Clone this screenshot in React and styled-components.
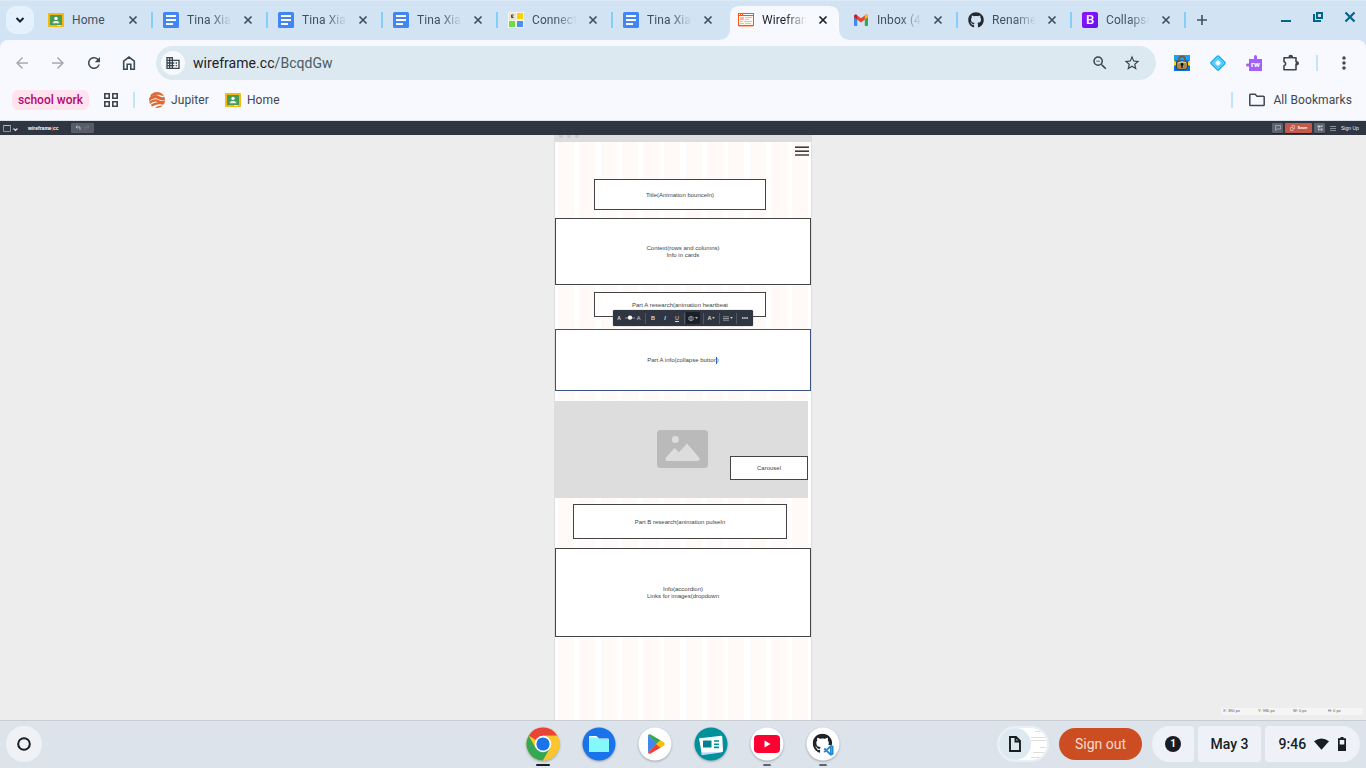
import React from 'react';
import styled, { createGlobalStyle, css } from 'styled-components';
import { FaGithub } from 'react-icons/fa';
import { MdDomain, MdZoomOut, MdStarOutline, MdMoreVert, MdArrowBack, MdArrowForward, MdRefresh } from 'react-icons/md';

const Global = createGlobalStyle`
  * { box-sizing: border-box; }
  html, body { margin: 0; padding: 0; }
  body { width: 1366px; height: 768px; overflow: hidden; font-family: Roboto, "Liberation Sans", sans-serif; }
  svg { display: block; flex: none; }
`;

const Desktop = styled.div`
  width: 1366px; height: 768px; display: flex; flex-direction: column; overflow: hidden;
  background: #d2e4f3;
`;

/* ---------- tab strip ---------- */
const TabStrip = styled.div`
  height: 40px; flex: none; display: flex; align-items: stretch; padding-left: 6px;
  border-top: 1px solid #dbeaf6;
`;
const TabSearch = styled.div`
  width: 28px; height: 28px; margin: 5px 4px 0 0; border-radius: 10px; background: #e5f2fe;
  display: flex; align-items: center; justify-content: center;
`;
const Tab = styled.div`
  position: relative; width: ${p => p.$w || 115}px; display: flex; align-items: center; padding: 0 15px 1px 10px;
  color: ${p => (p.$active ? '#1b2227' : '#40515d')};
  &::after {
    content: ''; display: ${p => (p.$sep ? 'block' : 'none')};
    position: absolute; right: 0; top: 11px; width: 2px; height: 16px; background: #84cff9;
  }
`;
const ActiveShape = styled.svg`
  position: absolute; left: -10px; bottom: 0;
`;
const TabIcon = styled.div`
  position: relative; width: 16px; height: 16px; margin-right: 8px; flex: none;
`;
const TabTitle = styled.div`
  position: relative; flex: 1; min-width: 0; height: 18px; line-height: 18px; font-size: 12px; letter-spacing: 0.1px;
  white-space: nowrap;
  ${p => p.$fade && css`mask-image: linear-gradient(90deg, #000 42%, transparent 80%);`}
`;
const TabClose = styled.svg`
  position: relative;
`;
const NewTab = styled.div`
  width: 32px; display: flex; align-items: center; justify-content: center; padding-bottom: 1px;
`;
const WindowButtons = styled.div`
  margin-left: auto; display: flex; gap: 20px; padding: 10px 10px 0 0;
`;

/* ---------- toolbar ---------- */
const Chrome = styled.div`
  height: 81px; flex: none; background: #f7f9fe; border-radius: 8px 8px 0 0; border-bottom: 1px solid #dbe3ea;
  display: flex; flex-direction: column;
`;
const ToolRow = styled.div`
  height: 46px; display: flex; align-items: center;
`;
const NavGroup = styled.div`
  width: 156px; padding-left: 13px; display: flex; gap: 18px; align-items: center;
`;
const Omnibox = styled.div`
  width: 1000px; height: 34px; border-radius: 17px; background: #dde9f0; display: flex; align-items: center;
  padding: 0 15px 0 5px;
`;
const SiteChip = styled.div`
  width: 24px; height: 24px; border-radius: 50%; background: #f7f9fe; margin-right: 8px;
  display: flex; align-items: center; justify-content: center; color: #3b474f;
`;
const Url = styled.div`
  font-size: 14px; letter-spacing: 0.05px; color: #1b2227; flex: 1; line-height: 20px;
  span { color: #4d5a63; }
`;
const OmniActions = styled.div`
  display: flex; gap: 14px; color: #3f464b;
`;
const Extensions = styled.div`
  display: flex; align-items: center; gap: 20px; margin-left: 18px;
`;
const Divider = styled.div`
  width: 2px; height: 16px; background: #c2e5fb; flex: none; margin: ${p => p.$m || 0};
`;
const BookmarkRow = styled.div`
  height: 26px; display: flex; align-items: center; padding: 2px 14px 0 12px; font-size: 12px; letter-spacing: 0.1px;
  color: #40474d; line-height: 18px;
`;
const GroupChip = styled.div`
  width: 77px; height: 20px; border-radius: 6px; background: #ffe4f0; color: #b80672; font-weight: 500;
  display: flex; align-items: center; justify-content: center; margin-right: 15px; letter-spacing: 0;
`;
const Bookmark = styled.div`
  display: flex; align-items: center; gap: ${p => p.$gap || 6}px; margin-right: ${p => p.$mr || 0}px;
`;

/* ---------- wireframe editor ---------- */
const Editor = styled.div`
  height: 599px; flex: none; display: flex; flex-direction: column; background: #ededed; font-family: "Liberation Sans", Arial, sans-serif;
  position: relative;
`;
const EditorBar = styled.div`
  height: 14px; flex: none; background: #2f3541; display: flex; align-items: center; padding: 0 8px 0 3px; color: #fff;
`;
const Brand = styled.div`
  font-size: 5px; font-weight: 700; line-height: 8px; margin-left: 10px; width: 43px; white-space: nowrap;
  span { color: #d9503c; }
`;
const UndoRedo = styled.div`
  width: 23px; height: 10px; border-radius: 1px; background: #575c66; display: flex; align-items: center; justify-content: space-evenly;
`;
const BarSpace = styled.div`
  flex: 1;
`;
const BarButton = styled.div`
  width: ${p => p.$w}px; height: 10px; border-radius: 1px; background: ${p => p.$bg || '#5c616b'};
  display: flex; align-items: center; justify-content: center; gap: 3px; margin-right: ${p => p.$mr || 2}px;
  font-size: 4.2px; font-weight: 700; line-height: 8px; box-shadow: 0 1px 0 #1e222b;
`;
const SignUp = styled.div`
  font-size: 5px; line-height: 8px; width: 17px; white-space: nowrap; color: #eceef0;
`;
const Artboard = styled.div`
  width: 258px; flex: 1; margin-left: 554px; border: solid #dedede; border-width: 0 1px; overflow: hidden;
  background: repeating-linear-gradient(90deg, #fffaf8 0 16px, #fff 16px 21.28px) 3px 0 / 251px 100% no-repeat #fff;
  display: flex; flex-direction: column; align-items: flex-start;
`;
const BrowserTop = styled.div`
  width: 256px; height: 7px; flex: none; background: #dddddd; display: flex; gap: 4px; padding-left: 4px; overflow: hidden;
  i { width: 4px; height: 4px; margin-top: -1px; border-radius: 50%; background: #cacaca; }
`;
const MenuIcon = styled.div`
  width: 14px; height: 10px; margin: 4px 0 0 240px; display: flex; flex-direction: column; justify-content: space-between;
  i { height: 2px; background: linear-gradient(#8a8a8a 50%, #3c3c3c 50%); }
  i:last-child { background: #707070; }
`;
const Block = styled.div`
  flex: none; width: ${p => p.$w}px; height: ${p => p.$h}px; margin: ${p => p.$mt || 0}px 0 0 ${p => p.$ml || 0}px;
  border: 1px solid ${p => p.$color || '#444'}; background: #fff; color: #444; padding-top: ${p => (p.$h % 2 && !p.$even ? 1 : 0)}px;
  display: flex; align-items: center; justify-content: center; text-align: center; font-size: 6px; line-height: 7px;
  white-space: nowrap;
`;
const Caret = styled.i`
  display: inline-block; width: 1px; height: 7px; background: #2e6bd8; vertical-align: -2px; margin: 0 -0.5px;
`;
const Picture = styled.div`
  flex: none; width: 253px; height: 97px; margin-top: 10px; background: #dddddd; display: flex;
`;
const PictureGlyph = styled.svg`
  margin: 29px 23px 0 101.5px;
`;
const FormatBar = styled.div`
  position: absolute; left: 613px; top: 189px; width: 140px; height: 16px; border-radius: 1.5px; background: #2f3541;
  box-shadow: 0 0 1px #2f3541; display: flex; align-items: center; color: #d9dbde;
  font-size: 5.5px; font-weight: 700; line-height: 8px;
`;
const Cell = styled.div`
  width: ${p => p.$w}px; height: ${p => p.$h || 12}px; display: flex; align-items: center; justify-content: center;
  background: ${p => (p.$on ? '#1b1f27' : 'transparent')}; gap: 1px; border-radius: 1px; margin: 0 ${p => (p.$on ? 1 : 0)}px;
  font-style: ${p => (p.$italic ? 'italic' : 'normal')}; text-decoration: ${p => (p.$under ? 'underline' : 'none')};
  font-size: ${p => p.$size || 5.5}px; font-weight: ${p => (p.$light ? 400 : 700)};
`;
const Rule = styled.div`
  width: 1px; height: 11px; background: #525863;
`;
const Coordinates = styled.div`
  position: absolute; left: 1221px; top: 587px; width: 142px; height: 7px; background: #f5f5f5; color: #555;
  display: flex; padding-left: 2px; font-size: 4px; line-height: 6px; white-space: nowrap;
  span { width: 35.3px; }
`;

/* ---------- shelf ---------- */
const Shelf = styled.div`
  flex: 1; background: #dce3eb; border-top: 1px solid #c8cdd4; display: flex; position: relative;
  align-items: flex-start; justify-content: space-between;
`;
const Launcher = styled.div`
  width: 36px; height: 36px; margin: 5px 0 0 6px; border-radius: 50%; background: #eef2f7;
  display: flex; align-items: center; justify-content: center;
`;
const Apps = styled.div`
  position: absolute; left: 526px; top: 6px; display: flex; gap: 22px;
`;
const ShelfApp = styled.div`
  width: 34px; display: flex; flex-direction: column; align-items: center;
  > svg { filter: drop-shadow(0 1px 1px rgba(60, 70, 80, 0.4)); }
`;
const Running = styled.div`
  width: ${p => p.$w}px; height: 2px; border-radius: 1px; margin-top: 3px; background: ${p => p.$c};
`;
const Status = styled.div`
  display: flex; margin: 5px 6px 0 0; align-items: center;
`;
const Tote = styled.div`
  width: 52px; height: 36px; border-radius: 18px; border: 2px solid #eaeff5; background: #fff; overflow: hidden; display: flex;
  align-items: center; margin-right: 10px;
`;
const ToteDoc = styled.div`
  width: 32px; height: 32px; border-radius: 50%; background: #dde9f0; display: flex; align-items: center; justify-content: center; flex: none;
`;
const SignOut = styled.div`
  width: 83px; height: 32px; border-radius: 16px; background: #cc4d21; color: #fbdacb; font-size: 14px; font-weight: 400;
  letter-spacing: 0; display: flex; align-items: center; justify-content: center; margin-right: 10px;
`;
const Pod = styled.div`
  width: ${p => p.$w}px; height: 36px; background: #eef2f8; border-radius: ${p => p.$r || '4px'}; margin-right: ${p => p.$mr || 0}px;
  display: flex; align-items: center; justify-content: center; color: #171d20; font-size: 14px; font-weight: 500; letter-spacing: 0.05px;
`;
const StatusIcons = styled.div`
  display: flex; align-items: center; gap: 9px; margin-left: 8px;
`;
const Badge = styled.div`
  width: 16px; height: 16px; border-radius: 50%; background: #171d20; color: #fff; font-size: 10px; font-weight: 700;
  line-height: 16px; text-align: center; letter-spacing: 0;
`;

const ClassroomIcon = () => (
  <svg width="16" height="16" viewBox="0 0 16 16">
    <rect x="0" y="1" width="16" height="14" rx="1" fill="#f6b90f" />
    <rect x="2" y="3" width="12" height="10" fill="#4a9a57" />
    <circle cx="8" cy="6.4" r="1.7" fill="#fff" />
    <path d="M4.6 11.2c0-1.7 1.8-2.3 3.4-2.3s3.4.6 3.4 2.3z" fill="#e8f3e9" />
    <path d="M9 13h4v1H9z" fill="#e6e6d0" />
  </svg>
);
const DocsIcon = () => (
  <svg width="16" height="16" viewBox="0 0 16 16">
    <rect width="16" height="16" rx="1.5" fill="#4285f4" />
    <path d="M3 4h10M3 8h10M3 12h7" stroke="#fff" strokeWidth="1.8" />
  </svg>
);
const ConnectIcon = () => (
  <svg width="16" height="16" viewBox="0 0 16 16">
    <rect width="16" height="16" fill="#f7f4e6" />
    <rect x="1" y="1" width="7" height="7" fill="#e8e4d4" />
    <path d="M5.6 3H3.5v2.500h2.100M3.500 4.200h1.600" stroke="#4a4a45" strokeWidth="1" fill="none" />
    <rect x="9" y="1" width="6" height="6" fill="#fdd000" />
    <rect x="1" y="9" width="6" height="6" fill="#6ade4a" />
    <rect x="9" y="9" width="6" height="6" fill="#4f8ef7" />
  </svg>
);
const WireframeIcon = () => (
  <svg width="16" height="16" viewBox="0 0 16 16">
    <rect x=".5" y="1.5" width="15" height="12" fill="#fff6f0" stroke="#ff5316" />
    <path d="M0 1h16v3H0z" fill="#ff5316" />
    <path d="M1 2.500h1M3 2.500h1M5 2.500h10" stroke="#fff" />
    <path d="M2 5h4v3H2z" fill="#ffb697" />
    <path d="M7 5.500h7M7 7.500h4M2 9.500h3M6 9.500h8M2 11.500h4M7 11.500h6M1 14.500h14" stroke="#ffb697" />
  </svg>
);
const GmailIcon = () => (
  <svg width="16" height="16" viewBox="0 0 16 16">
    <path d="M1 4v9q0 1 1 1h2.200V6.500z" fill="#4285f4" />
    <path d="M15 4v9q0 1-1 1h-2.200V6.500z" fill="#34a853" />
    <path d="M1 4.300Q1 2.200 3 2.400L8 6.200l5-3.800q2-.2 2 1.900v.9L8 10.400 1 5.200z" fill="#ea4335" />
    <path d="M11.800 3.300 13 2.400q2-.2 2 1.900v.9l-3.200 2.400z" fill="#fbbc04" />
    <path d="M1 4.300v.9l3.200 2.400V3.300L3 2.400Q1 2.200 1 4.300z" fill="#c5221f" />
  </svg>
);
const BootSquare = styled.div`
  width: 16px; height: 16px; border-radius: 2px; background: linear-gradient(135deg, #9013fe, #6610f2);
  color: #fff; font: 500 13px/16px Roboto, sans-serif; text-align: center;
`;

const tabs = [
  { title: 'Home', icon: <ClassroomIcon />, sep: true },
  { title: 'Tina Xia', icon: <DocsIcon />, sep: true, fade: true },
  { title: 'Tina Xia', icon: <DocsIcon />, sep: true, fade: true },
  { title: 'Tina Xia', icon: <DocsIcon />, sep: true, fade: true },
  { title: 'Connect', icon: <ConnectIcon />, sep: true, fade: true },
  { title: 'Tina Xia', icon: <DocsIcon />, fade: true },
  { title: 'Wirefram', icon: <WireframeIcon />, active: true, fade: true },
  { title: 'Inbox (4', icon: <GmailIcon />, sep: true, fade: true },
  { title: 'Rename', icon: <FaGithub size={16} color="#24292f" />, sep: true, fade: true, w: 114 },
  { title: 'Collapse', icon: <BootSquare>B</BootSquare>, sep: true, fade: true, w: 114 },
];

const HomeIcon = () => (
  <svg width="16" height="16" viewBox="0 0 16 16">
    <path d="M2.700 14.200V6.200L8 2l5.300 4.200v8h-3.500V9.200H6.200v5z" fill="none" stroke="#3b4a54" strokeWidth="1.600" />
  </svg>
);
const PuzzleIcon = () => (
  <svg width="18" height="18" viewBox="0 0 18 18">
    <path
      d="M2 3.800h5.200V3a1.500 1.500 0 0 1 3 0v.8H14v4h.6a1.400 1.400 0 0 1 0 2.800H14V15.700H2v-3.900a2.100 2.100 0 0 0 0-4.100z"
      fill="none" stroke="#3b474f" strokeWidth="1.600" strokeLinejoin="round"
    />
    <circle cx="8.700" cy="2.900" r="1.500" fill="#3b474f" /><circle cx="15.200" cy="9.200" r="1.500" fill="#3b474f" />
  </svg>
);
const JupiterIcon = () => (
  <svg width="16" height="16" viewBox="0 0 16 16">
    <defs><clipPath id="planet"><circle cx="8" cy="8" r="8" /></clipPath></defs>
    <g clipPath="url(#planet)">
      <rect width="16" height="16" fill="#f7f9fe" />
      <g fill="none" stroke="#dd6a35">
        <path d="M1 3Q7-.5 15 2.600" strokeWidth="3.400" />
        <path d="M-1 8.200Q5 2.800 9.500 5.600t8-.6" strokeWidth="3" />
        <path d="M-1 12Q5 6.600 9.500 9.200t8-.8" strokeWidth="2.400" />
        <path d="M1 15Q7.500 9.300 16 12" strokeWidth="2.400" />
        <path d="M6 16.800Q11 13.500 15 14.800" strokeWidth="1.800" />
      </g>
    </g>
  </svg>
);
const LockIcon = () => (
  <svg width="16" height="16" viewBox="0 0 16 16">
    <rect width="16" height="16" fill="#0a6fe0" />
    <path d="M0 0h16v5H0z" fill="#19a4f0" />
    <path d="M0 5l2 2v3l-2 1zM16 5l-2 2v3l2 1z" fill="#ffd21e" />
    <path d="M5 7V4.500a3 3 0 0 1 6 0V7" fill="none" stroke="#6b6148" strokeWidth="2" />
    <path d="M2.500 7.500Q8 4.500 13.500 7.500V12q0 2.500-3 2.500h-5q-3 0-3-2.500z" fill="#a88c50" stroke="#4b3d20" />
    <path d="M3.800 8Q8 5.600 12 7.600" stroke="#efe2b4" fill="none" />
    <circle cx="8" cy="9.500" r="1.400" fill="#111" /><path d="M7.400 10h1.200v3H7.400z" fill="#111" />
  </svg>
);
const DiamondIcon = () => (
  <svg width="16" height="16" viewBox="0 0 16 16">
    <rect x="2.700" y="2.700" width="10.600" height="10.600" rx="1" transform="rotate(45 8 8)" fill="#8fdcfb" stroke="#11aef4" strokeWidth="1.300" />
    <rect x="4.500" y="4.500" width="7" height="7" transform="rotate(45 8 8)" fill="none" stroke="#2db9f6" strokeWidth="1.300" strokeDasharray="1.300 .6" />
    <circle cx="8" cy="8" r="2" fill="#fff" />
  </svg>
);
const RwIcon = () => (
  <svg width="16" height="16" viewBox="0 0 16 16">
    <path d="M3 4h5V1.500a1.500 1.500 0 0 1 3 0V4h5v12H3v-4.500H1.500a1.500 1.500 0 0 1 0-3H3z" fill="#a560f8" />
    <text x="9.500" y="12" textAnchor="middle" fontSize="8" fontWeight="700" fontFamily="Roboto" fill="#fff">rw</text>
  </svg>
);

const ChromeApp = () => (
  <svg width="34" height="34" viewBox="0 0 34 34">
    <circle cx="17" cy="17" r="16.500" fill="#fbc52f" />
    <path d="M17 17 2.710 8.750A16.500 16.500 0 0 1 31.290 8.750H17z" fill="#e94435" />
    <path d="M2.710 8.750A16.500 16.500 0 0 0 17 33.500L24.140 21.130 17 17 9.860 21.130z" fill="#34a853" />
    <path d="M31.290 8.750A16.500 16.500 0 0 1 17 33.500l7.140-12.370L17 8.750z" fill="#fbc52f" />
    <circle cx="17" cy="17" r="8.300" fill="#fff" /><circle cx="17" cy="17" r="6.600" fill="#1a73e8" />
  </svg>
);
const FilesApp = () => (
  <svg width="34" height="34" viewBox="0 0 34 34">
    <circle cx="17" cy="17" r="16.500" fill="#1a73e8" />
    <path d="M7 10q0-1 1-1h6.500l2.500 2.500H26q1 0 1 1V24q0 1-1 1H8q-1 0-1-1z" fill="#fff" />
    <path d="M7 10.500h8l2 1.500h9q1 0 1 1V24q0 1-1 1H8q-1 0-1-1z" fill="#84f9fc" />
  </svg>
);
const PlayApp = () => (
  <svg width="34" height="34" viewBox="0 0 34 34">
    <circle cx="17" cy="17" r="16.500" fill="#fff" />
    <path d="M10 8.500v17L19 17z" fill="#4285f4" />
    <path d="M10 8.500q.6-2 2.600-1L22.500 13.200 18.500 17z" fill="#34a853" />
    <path d="M10 25.500q.6 2 2.600 1L22.500 20.800 18.500 17z" fill="#ea4335" />
    <path d="M22.300 13.200 26 15.500q1.800 1.500 0 3L22.300 20.800 18.200 17z" fill="#fbbc04" />
  </svg>
);
const NewsApp = () => (
  <svg width="34" height="34" viewBox="0 0 34 34">
    <circle cx="17" cy="17" r="16.500" fill="#00929b" />
    <path d="M5.500 11l21-1 1 15.500-20 2.800z" fill="#bcd8fb" />
    <path d="M5 11.500 27 8.700q1.200 0 1.300 1l.7 14.300q0 1-1 1l-19 .5q-1 0-1.300-1z" fill="#fff" />
    <rect x="9" y="13.500" width="8.500" height="7" rx=".5" fill="#00838d" />
    <path d="M20 14h5M20 17.200h5M20 20.400h5" stroke="#00929b" strokeWidth="1.600" />
  </svg>
);
const YouTubeApp = () => (
  <svg width="34" height="34" viewBox="0 0 34 34">
    <circle cx="17" cy="17" r="16.500" fill="#fff" />
    <rect x="4" y="8" width="26" height="18" rx="4" fill="#ff0033" />
    <path d="M14.500 13.500v7l6-3.500z" fill="#fff" />
  </svg>
);
const CodeApp = () => (
  <svg width="34" height="34" viewBox="0 0 34 34">
    <circle cx="17" cy="17" r="16.500" fill="#fff" />
    <FaGithub x="6.500" y="6.500" size={20} color="#1f2328" />
    <path d="M17.500 18H29v11H17.500z" fill="#fff" />
    <path d="M24.800 18.900 26.600 19.600v7.400l-1.800.7-6.600-6.200" fill="none" stroke="#1f8ad2" strokeWidth="1.800" />
    <path d="M18.200 25.200l6.600-6.200v8.500" fill="none" stroke="#1f8ad2" strokeWidth="1.800" />
  </svg>
);

const apps = [
  { icon: <ChromeApp />, w: 14, c: '#171d20' },
  { icon: <FilesApp /> }, { icon: <PlayApp /> }, { icon: <NewsApp /> },
  { icon: <YouTubeApp />, w: 8, c: '#586974' },
  { icon: <CodeApp />, w: 8, c: '#586974' },
];

const Arrow = () => <svg width="3" height="2" viewBox="0 0 3 2"><path d="M0 0h3L1.500 2z" fill="#b9bcc2" /></svg>;

export default function App() {
  return (
    <Desktop>
      <Global />
      <TabStrip>
        <TabSearch>
          <svg width="10" height="8" viewBox="0 0 10 8"><path d="M1.500 2 5 5.500 8.500 2" fill="none" stroke="#1b2227" strokeWidth="2" /></svg>
        </TabSearch>
        {tabs.map((t, i) => (
          <Tab key={i} $sep={t.sep} $active={t.active} $w={t.w}>
            {t.active && (
              <ActiveShape width="133" height="34" viewBox="0 0 133 34">
                <path d="M0 34Q12 34 12 22V10Q12 0 22 0H111Q121 0 121 10V22Q121 34 133 34z" fill="#f7f9fe" />
              </ActiveShape>
            )}
            <TabIcon>{t.icon}</TabIcon>
            <TabTitle $fade={t.fade}>{t.title}</TabTitle>
            <TabClose width="10" height="10" viewBox="0 0 10 10">
              <path d="M1.500 1.500l7 7m0-7l-7 7" stroke={t.active ? '#1b2227' : '#40515d'} strokeWidth="1.700" />
            </TabClose>
          </Tab>
        ))}
        <NewTab>
          <svg width="12" height="12" viewBox="0 0 12 12"><path d="M6 1v10M1 6h10" stroke="#40515d" strokeWidth="1.600" /></svg>
        </NewTab>
        <WindowButtons>
          <svg width="12" height="12" viewBox="0 0 12 12"><path d="M1 10h10" stroke="#00668a" strokeWidth="2" /></svg>
          <svg width="12" height="12" viewBox="0 0 12 12"><path d="M5 2h5v5H5zM2 3v7h7" fill="none" stroke="#00668a" strokeWidth="2" /></svg>
          <svg width="12" height="12" viewBox="0 0 12 12"><path d="M1.500 1.500l9 9m0-9l-9 9" stroke="#00668a" strokeWidth="2.200" /></svg>
        </WindowButtons>
      </TabStrip>

      <Chrome>
        <ToolRow>
          <NavGroup>
            <MdArrowBack size={18} color="#a5abb0" />
            <MdArrowForward size={18} color="#a5abb0" />
            <MdRefresh size={18} color="#3b4a54" />
            <HomeIcon />
          </NavGroup>
          <Omnibox>
            <SiteChip><MdDomain size={16} /></SiteChip>
            <Url>wireframe.cc<span>/BcqdGw</span></Url>
            <OmniActions><MdZoomOut size={18} /><MdStarOutline size={18} /></OmniActions>
          </Omnibox>
          <Extensions>
            <LockIcon /><DiamondIcon /><RwIcon />
            <PuzzleIcon />
          </Extensions>
          <Divider $m="0 16px 0 16px" />
          <MdMoreVert size={20} color="#3b474f" />
        </ToolRow>
        <BookmarkRow>
          <GroupChip>school work</GroupChip>
          <svg width="14" height="14" viewBox="0 0 14 14">
            <path d="M.8.8h4.400v4.400H.8zM8.800.8h4.400v4.400H8.800zM.8 8.800h4.400v4.400H.8zM8.800 8.800h4.400v4.400H8.800z" fill="none" stroke="#3f4448" strokeWidth="1.600" />
          </svg>
          <Divider $m="0 14px 0 15px" />
          <Bookmark $mr={16}><JupiterIcon />Jupiter</Bookmark>
          <Bookmark><ClassroomIcon />Home</Bookmark>
          <Divider $m="0 16px 0 auto" />
          <Bookmark $gap={8}>
            <svg width="16" height="14" viewBox="0 0 16 14"><path d="M.8 2v9.800q0 .8.800.8h12.800q.8 0 .8-.8V4q0-.8-.8-.8H8L6.200 1.300H1.600q-.8 0-.8.700z" fill="none" stroke="#40474d" strokeWidth="1.500" /></svg>
            All Bookmarks
          </Bookmark>
        </BookmarkRow>
      </Chrome>

      <Editor>
        <EditorBar>
          <svg width="15" height="9" viewBox="0 0 15 9">
            <path d="M.5 1.500h7v6h-7z" fill="none" stroke="#8d9299" /><path d="M.5 1.500h7" stroke="#bbb" />
            <path d="M10.500 4.500l2 2 2-2" fill="none" stroke="#ddd" strokeWidth="1.200" />
          </svg>
          <Brand>wireframe<span>|</span>cc</Brand>
          <UndoRedo>
            <svg width="6" height="6" viewBox="0 0 6 6"><path d="M2.500.5L1 2l1.500 1.500M1 2h4v3" fill="none" stroke="#c5c7cb" strokeWidth=".8" /></svg>
            <svg width="6" height="6" viewBox="0 0 6 6"><path d="M3.500.5L5 2 3.500 3.500M5 2H1v3" fill="none" stroke="#737780" strokeWidth=".8" /></svg>
          </UndoRedo>
          <BarSpace />
          <BarButton $w={11}><svg width="6" height="6" viewBox="0 0 6 6"><path d="M.5 5.500v-5h5V4H2z" fill="none" stroke="#b9bcc1" strokeWidth=".7" /></svg></BarButton>
          <BarButton $w={27} $bg="#c2594b">
            <svg width="5" height="6" viewBox="0 0 5 6"><path d="M.5 2.500h2.500v3H.5zM2 2V.5h2.500v3H3" fill="none" stroke="#ecc2bb" strokeWidth=".7" /></svg>
            Save
          </BarButton>
          <BarButton $w={11} $mr={5}><svg width="6" height="6" viewBox="0 0 6 6"><path d="M.5.5h3v2h-3zM1 3.500h1.500v2H1zM4 .5h1.500v1.500H4zM3.500 3.500h2v2h-2z" fill="#c9cbcf" /></svg></BarButton>
          <svg width="11" height="6" viewBox="0 0 11 6"><path d="M0 1.500h6M0 3.500h6M0 5.500h6" stroke="#a0a4aa" strokeWidth=".8" /></svg>
          <SignUp>Sign Up</SignUp>
        </EditorBar>
        <Artboard>
          <BrowserTop><i /><i /><i /></BrowserTop>
          <MenuIcon><i /><i /><i /></MenuIcon>
          <Block $w={172} $h={31} $mt={23} $ml={39}>Title(Animation bounceIn)</Block>
          <Block $w={256} $h={67} $mt={8} $even>Context(rows and columns)<br />Info in cards</Block>
          <Block $w={172} $h={25} $mt={7} $ml={39}>Part A research(animation heartbeat</Block>
          <Block $w={256} $h={62} $mt={12} $color="#3b5382"><span>Part A info(collapse button<Caret />)</span></Block>
          <Picture>
            <PictureGlyph width="51" height="38" viewBox="0 0 51 38">
              <rect width="51" height="38" rx="3.500" fill="#bababa" />
              <circle cx="18.300" cy="9.500" r="3.500" fill="#ddd" />
              <path d="M8.500 29.500v-1.500L17.500 18l4.500 4.200L30 13.500 42.500 28v1.500q0 1.500-1.500 1.500H10q-1.500 0-1.500-1.500z" fill="#ddd" />
            </PictureGlyph>
            <Block $w={78} $h={24} $mt={55} $ml={-0.5}>Carousel</Block>
          </Picture>
          <Block $w={214} $h={35} $mt={6} $ml={18}>Part B research(animation pulseIn</Block>
          <Block $w={256} $h={89} $mt={9} $even>Info(accordion)<br />Links for images(dropdown</Block>
        </Artboard>
        <FormatBar>
          <Cell $w={12} $size={5}>A</Cell>
          <svg width="10" height="6" viewBox="0 0 10 6"><path d="M0 3h10" stroke="#a9acb1" strokeWidth=".8" /><circle cx="5" cy="2.600" r="2.200" fill="#fff" /></svg>
          <Cell $w={7} $light>A</Cell>
          <Cell $w={3} />
          <Rule />
          <Cell $w={14}>B</Cell>
          <Cell $w={10} $italic>I</Cell>
          <Cell $w={14} $under $light>U</Cell>
          <Rule />
          <Cell $w={14} $on><svg width="6" height="5" viewBox="0 0 6 5"><path d="M1.500.500h3M0 1.800h6M0 3.200h6M1.500 4.500h3" stroke="#a6a9af" strokeWidth=".8" /></svg><Arrow /></Cell>
          <Cell $w={2} />
          <Rule />
          <Cell $w={15}>A<Arrow /></Cell>
          <Rule />
          <Cell $w={16}><svg width="6" height="5" viewBox="0 0 6 5"><path d="M0 .8h6M0 2.500h6M0 4.200h6" stroke="#a6a9af" strokeWidth=".8" /></svg><Arrow /></Cell>
          <Rule />
          <Cell $w={16}><svg width="6" height="2" viewBox="0 0 6 2"><path d="M0 1h1.600M2.200 1h1.600M4.400 1H6" stroke="#d9dbde" strokeWidth="1.300" /></svg></Cell>
        </FormatBar>
        <Coordinates><span>X: 390 px</span><span>Y: 980 px</span><span>W: 0 px</span><span>H: 0 px</span></Coordinates>
      </Editor>

      <Shelf>
        <Launcher><svg width="14" height="14" viewBox="0 0 14 14"><circle cx="7" cy="7" r="5.800" fill="none" stroke="#171d20" strokeWidth="2" /></svg></Launcher>
        <Apps>
          {apps.map((a, i) => (
            <ShelfApp key={i}>{a.icon}{a.w && <Running $w={a.w} $c={a.c} />}</ShelfApp>
          ))}
        </Apps>
        <Status>
          <Tote>
            <ToteDoc>
              <svg width="12" height="16" viewBox="0 0 12 16"><path d="M1 1h6l4 4v10H1zM6.500 1v4.500H11" fill="none" stroke="#171d20" strokeWidth="1.900" /></svg>
            </ToteDoc>
            <svg width="18" height="32" viewBox="0 0 18 32"><path d="M0 9.500h16M0 12.500h16M2 24.500h14M0 29.500h14" stroke="#d3d5d7" strokeWidth=".8" /><path d="M4 3.500h6M9 19.500h6" stroke="#dedede" /></svg>
          </Tote>
          <SignOut>Sign out</SignOut>
          <Pod $w={42} $r="18px 4px 4px 18px" $mr={4}><Badge>1</Badge></Pod>
          <Pod $w={63} $mr={4}>May 3</Pod>
          <Pod $w={95} $r="4px 18px 18px 4px">
            9:46
            <StatusIcons>
              <svg width="15" height="12" viewBox="0 0 16 12"><path d="M0 3Q8-3 16 3L8 12z" fill="#171d20" /></svg>
              <svg width="8" height="14" viewBox="0 0 8 14"><path d="M2.500 0h3v1.300H8V14H0V1.300h2.500zM1.700 3v4.500h4.600V3z" fill="#171d20" fillRule="evenodd" /></svg>
            </StatusIcons>
          </Pod>
        </Status>
      </Shelf>
    </Desktop>
  );
}
